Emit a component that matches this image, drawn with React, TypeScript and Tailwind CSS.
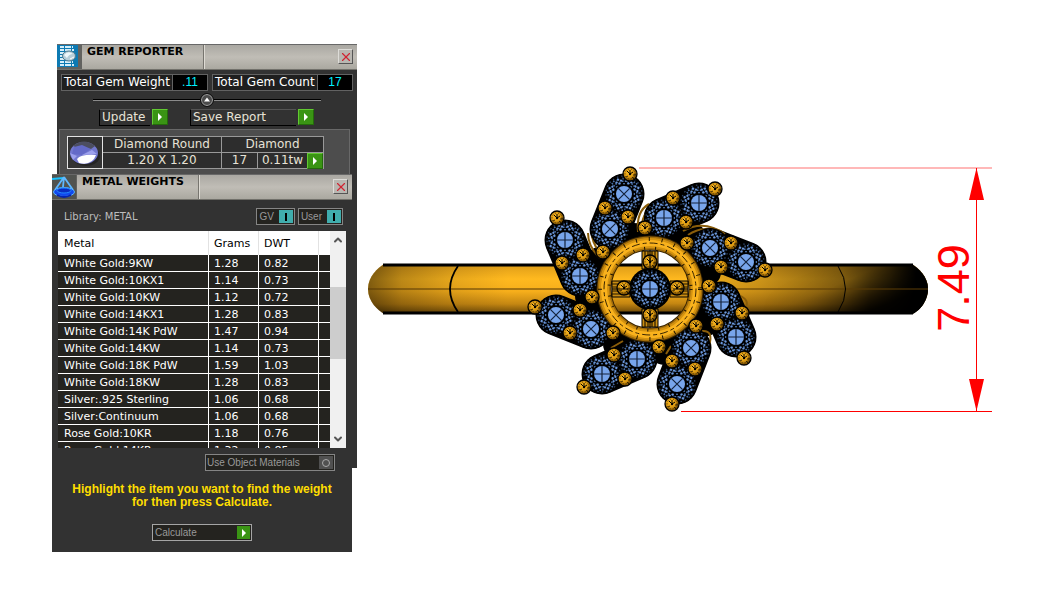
import type { ReactNode } from "react";
import { X, ChevronDown, ChevronUp } from "lucide-react";

const metals = [
  { name: "White Gold:9KW", grams: "1.28", dwt: "0.82" },
  { name: "White Gold:10KX1", grams: "1.14", dwt: "0.73" },
  { name: "White Gold:10KW", grams: "1.12", dwt: "0.72" },
  { name: "White Gold:14KX1", grams: "1.28", dwt: "0.83" },
  { name: "White Gold:14K PdW", grams: "1.47", dwt: "0.94" },
  { name: "White Gold:14KW", grams: "1.14", dwt: "0.73" },
  { name: "White Gold:18K PdW", grams: "1.59", dwt: "1.03" },
  { name: "White Gold:18KW", grams: "1.28", dwt: "0.83" },
  { name: "Silver:.925 Sterling", grams: "1.06", dwt: "0.68" },
  { name: "Silver:Continuum", grams: "1.06", dwt: "0.68" },
  { name: "Rose Gold:10KR", grams: "1.18", dwt: "0.76" },
  { name: "Rose Gold:14KR", grams: "1.32", dwt: "0.85" },
];

// [x, y, rotation] of every accent stone, listed in pairs that share one setting
const gemPairs = [
  [[624, 194, 45], [610, 229, 45]],
  [[565, 240, 0], [580, 276, 0]],
  [[699, 203, 0], [664, 218, 0]],
  [[746, 262, 45], [710, 248, 45]],
  [[556, 315, 45], [591, 329, 45]],
  [[602, 374, 0], [637, 359, 0]],
  [[736, 337, 0], [721, 302, 0]],
  [[677, 384, 45], [691, 348, 45]],
];

const prongs = [
  [630, 174], [605, 208], [628, 217], [557, 218], [583, 255], [562, 263], [603, 252], [645, 228],
  [715, 189], [673, 198], [686, 222], [687, 243], [731, 243], [721, 267], [765, 270], [709, 286],
  [535, 307], [580, 310], [570, 333], [592, 297], [613, 333], [614, 355], [584, 387], [625, 379],
  [742, 313], [717, 324], [744, 358], [696, 326], [659, 347], [672, 361], [695, 369], [672, 404],
];

// dark undersides where neighbouring settings meet the halo
const joints = [
  [600, 262], [590, 296], [645, 236], [690, 236], [706, 272], [704, 322], [664, 350], [618, 344], [604, 316], [634, 238],
];

const octants = [0, 45, 90, 135, 180, 225, 270, 315];

function Gem({ x, y, turn }: { x: number; y: number; turn: number }) {
  return (
    <g transform={`translate(${x} ${y})`}>
      <circle r="20" fill="#000" />
      <g transform={`rotate(${turn})`} fill="none">
        <circle r="18" stroke="#30486b" strokeWidth="1.2" strokeDasharray="1.5 3" />
        {octants.map((a) => (
          <g key={a} transform={`rotate(${a + 22})`}>
            <path d="M0 -17 L4 -13.500 L0 -10 L-4 -13.500Z" fill="#6c98dc" />
            <path d="M-2.500 -15.500 L2.500 -11.500 M2.500 -15.500 L-2.500 -11.500" stroke="#000" strokeWidth="1" />
          </g>
        ))}
        {octants.map((a) => (
          <g key={a} transform={`rotate(${a})`}>
            <path d="M-1.500 -16.500 h1.200 v2 h-1.200Z M1 -17 h1.500 v1.600 h-1.500Z M-2 -13.500 h1.500 v1.500 h-1.500Z M.8 -13.500 h1.500 v1.500 h-1.500Z" fill="#4f77b3" />
            <path d="M-1 -10.800 h2 v1 h-2Z" fill="#5d88c9" />
          </g>
        ))}
        <circle r="8" fill="#78a5eb" />
        <path d="M-8 0H8M0 -8V8" stroke="#14233c" strokeWidth="1.2" />
      </g>
    </g>
  );
}

function Prong({ x, y }: { x: number; y: number }) {
  return (
    <g transform={`translate(${x} ${y})`} fill="none" stroke="#000">
      <circle r="7" fill="url(#bead)" strokeWidth="1.300" />
      <circle r="5" stroke="#2b1c00" strokeWidth=".8" strokeDasharray="1 2" />
      <path d="M-3 -3 L0 0 L3 -2 M0 0 V-4" strokeWidth="1" />
      <circle r="1.200" fill="#000" strokeWidth="0" />
      <path d="M2 3 L4 5 M-4 3 L-2 2 M3 1 H6" strokeWidth=".7" />
    </g>
  );
}

function RingView() {
  return (
    <svg className="h-full w-full" viewBox="360 0 679 612" role="img" aria-label="Ring model">
      <defs>
        <linearGradient id="band" x1="0" x2="0" y1="0" y2="1">
          <stop offset="0" stopColor="#dd9c18" />
          <stop offset=".3" stopColor="#ffb91f" />
          <stop offset=".55" stopColor="#f6ae1b" />
          <stop offset=".8" stopColor="#c58712" />
          <stop offset="1" stopColor="#684507" />
        </linearGradient>
        <linearGradient id="shade" x1="0" x2="1" y1="0" y2="0">
          <stop offset="0" stopColor="#000" stopOpacity=".5" />
          <stop offset=".06" stopColor="#000" stopOpacity=".26" />
          <stop offset=".15" stopColor="#000" stopOpacity=".1" />
          <stop offset=".25" stopColor="#000" stopOpacity="0" />
          <stop offset=".55" stopColor="#000" stopOpacity="0" />
          <stop offset=".7" stopColor="#000" stopOpacity=".2" />
          <stop offset=".85" stopColor="#000" stopOpacity=".48" />
          <stop offset=".93" stopColor="#000" stopOpacity=".76" />
          <stop offset=".98" stopColor="#000" />
          <stop offset="1" stopColor="#000" />
        </linearGradient>
        <linearGradient id="corner" gradientUnits="userSpaceOnUse" x1="826" x2="862" y1="264" y2="350">
          <stop offset="0" stopColor="#000" stopOpacity="0" />
          <stop offset=".25" stopColor="#000" stopOpacity=".08" />
          <stop offset=".65" stopColor="#000" stopOpacity=".9" />
          <stop offset="1" stopColor="#000" />
        </linearGradient>
        <linearGradient id="fade" gradientUnits="userSpaceOnUse" x1="760" x2="870" y1="0" y2="0">
          <stop offset="0" stopColor="#000" />
          <stop offset="1" stopColor="#fff" />
        </linearGradient>
        <mask id="fadeIn">
          <path d="M760 260 H930 V320 H760Z" fill="url(#fade)" />
        </mask>
        <radialGradient id="bead" cx=".42" cy=".4">
          <stop offset="0" stopColor="#ffbd26" />
          <stop offset=".65" stopColor="#dc9a12" />
          <stop offset="1" stopColor="#8a5c05" />
        </radialGradient>
      </defs>

      {/* shank */}
      <path
        d="M384 264 H912 C918 268 928 276 928 289 C928 302 918 312 912 314 H384 C378 310 368 302 368 289 C368 276 378 268 384 264Z"
        fill="url(#band)"
      />
      <path
        d="M384 264 H912 C918 268 928 276 928 289 C928 302 918 312 912 314 H384 C378 310 368 302 368 289 C368 276 378 268 384 264Z"
        fill="url(#shade)"
      />
      <path
        d="M760 265 H912 C918 268 928 276 928 289 C928 302 918 312 912 314 H760Z"
        fill="url(#corner)"
        mask="url(#fadeIn)"
      />
      <path d="M383 265 H913 M383 313 H913" fill="none" stroke="#000" strokeWidth="3" />
      <path d="M368 289 H928" fill="none" stroke="#5a3c05" strokeWidth="1.500" strokeOpacity=".7" />
      <path d="M458 266 Q442 289 458 312" fill="none" stroke="#000" strokeWidth="1.800" />
      <path d="M838 266 Q853 289 838 312" fill="none" stroke="#000" strokeWidth="1" />

      {/* galleries under the accent stones */}
      <circle cx="650" cy="289" r="57" fill="none" stroke="#000" strokeWidth="13" />
      {joints.map(([x, y]) => (
        <circle key={`${x}-${y}`} cx={x} cy={y} r="15" fill="#000" />
      ))}

      {/* opening of the halo */}
      <circle cx="650" cy="289" r="41" fill="#fff" />
      <path d="M612 265 H688 V313 H612Z" fill="url(#band)" />
      <path d="M612 265 H688 M612 313 H688" fill="none" stroke="#000" strokeWidth="3" />

      <g strokeLinecap="round" strokeWidth="41" stroke="#000">
        {gemPairs.map(([a, b]) => (
          <path key={a[0]} d={`M${a[0]} ${a[1]} L${b[0]} ${b[1]}`} />
        ))}
      </g>
      <g fill="none" stroke="#8a5d0a" strokeWidth="2">
        <path d="M588 233 Q588 247 600 258 M592 236 Q594 248 604 256" />
        <path d="M638 232 Q636 211 649 204 M642 229 Q641 214 653 207" />
        <path d="M683 231 Q704 219 725 234 M688 235 Q704 224 720 234" />
        <path d="M741 296 Q751 302 744 309 M702 331 Q714 330 709 346 M700 338 L709 341" />
        <path d="M666 354 L671 346 M571 250 L577 247 M611 348 L623 341" />
      </g>

      {gemPairs.flat().map(([x, y, turn]) => (
        <Gem key={`${x}-${y}`} x={x} y={y} turn={turn} />
      ))}

      {/* halo tube */}
      <g fill="none">
        <circle cx="650" cy="289" r="46" stroke="#3a2500" strokeWidth="15" />
        <circle cx="650" cy="289" r="46" stroke="#a36e0b" strokeWidth="13" />
        <circle cx="650" cy="289" r="46" stroke="#d39210" strokeWidth="10" />
        <circle cx="650" cy="289" r="46" stroke="#f9b21d" strokeWidth="6" />
        <circle cx="650" cy="289" r="46" stroke="#3a2600" strokeWidth="1" strokeDasharray="8 3 4 3" />
        <circle cx="650" cy="289" r="50" stroke="#1e1400" strokeWidth="4" strokeDasharray="1 12" />
        <circle cx="650" cy="289" r="41" stroke="#1e1400" strokeWidth="3" strokeDasharray="1 10" />
      </g>

      {/* centre stone with its four bars */}
      {[0, 90, 180, 270].map((a) => (
        <g key={a} transform={`translate(650 289) rotate(${a})`}>
          <path d="M-8 -20 V-38 H8 V-20Z" fill="#c98c12" stroke="#000" strokeWidth="1" />
          <path d="M-5 -20 V-38 M-2 -20 V-38 M2 -20 V-38 M5 -20 V-38" stroke="#251900" strokeWidth="1.200" />
        </g>
      ))}
      <circle cx="650" cy="289" r="21" fill="#000" />
      <Gem x={650} y={289} turn={0} />
      {[[650, 262], [677, 288], [650, 315], [624, 288], ...prongs].map(([x, y]) => (
        <Prong key={`${x}-${y}`} x={x} y={y} />
      ))}
      <path d="M650 250 V281 M650 297 V328 M612 289 H628 M673 289 H688" fill="none" stroke="#000" strokeWidth="1" />

      {/* dimension */}
      <path d="M639 168 H992" fill="none" stroke="#ffb8b8" strokeWidth="2" />
      <path d="M681 411.500 H992" fill="none" stroke="#ff0000" strokeWidth="1" />
      <path d="M976.500 168 V411" fill="none" stroke="#ff0000" strokeWidth="1" />
      <path d="M976.500 168 L984 200 H969Z M976.500 411 L984 379 H969Z" fill="#ff0000" />
      <text
        transform="translate(969 288) rotate(-90)"
        textAnchor="middle"
        fontSize="45"
        fill="#ff0000"
        className="font-['Liberation_Sans',sans-serif]"
      >
        7.49
      </text>
    </svg>
  );
}

function PlayIcon() {
  return (
    <svg className="h-2 w-2" viewBox="0 0 8 8" aria-hidden="true">
      <path d="M2 0 L6 4 L2 8Z" fill="#fff" />
    </svg>
  );
}

const greenBox =
  "flex h-4 w-4 shrink-0 items-center justify-center border border-t-[#62c932] border-l-[#62c932] border-r-[#246b0b] border-b-[#246b0b] bg-[#3a9414]";

function TitleBar({ title, icon }: { title: string; icon: ReactNode }) {
  return (
    <header className="flex h-[26px] border-t border-b border-t-[#686868] border-b-[#72716b] bg-linear-to-b from-[#aaa8a2] via-[#c0bdb6] to-[#aaa8a0]">
      <div className="h-6 w-[25px] shrink-0 bg-[#62625f]">{icon}</div>
      <h2 className="w-[122px] border-r border-[#77756f] pl-[5px] text-[11px] leading-[14px] font-bold whitespace-nowrap text-black">
        {title}
      </h2>
      <div className="flex flex-1 items-start justify-end border-l border-[#dedbd4] pt-1 pr-1">
        <button
          type="button"
          aria-label={`Close ${title}`}
          className="flex h-[15px] w-[15px] items-center justify-center border border-t-[#dddcd8] border-l-[#dddcd8] border-r-[#555] border-b-[#555] bg-[#b9b7b1] text-[#d02432]"
        >
          <X className="h-3.5 w-3.5 shrink-0" strokeWidth={2} />
        </button>
      </div>
    </header>
  );
}

function ReporterIcon() {
  return (
    <svg className="h-6 w-6" viewBox="0 0 24 24" aria-hidden="true">
      <path d="M0 0H24V24H0Z" fill="#62625f" />
      <path d="M0 0H21V22H0Z" fill="#0d7ab3" />
      <path d="M3 2H16M3 5H17M3 8H8M3 11H7M3 14H8M3 17H16M3 20H17" stroke="#d5eef9" strokeWidth="2" strokeDasharray="4 1 6 1" />
      <ellipse cx="12" cy="11" rx="6.500" ry="5" fill="#b6ced9" stroke="#527b8e" />
      <path d="M7 10 Q11 5 16 9 Q12 9 10 13Z" fill="#edf7fa" />
      <path d="M13 14 L17 12" stroke="#fff" />
    </svg>
  );
}

function ScaleIcon() {
  return (
    <svg className="h-6 w-6" viewBox="0 0 24 24" aria-hidden="true">
      <path d="M0 0H24V24H0Z" fill="#51534f" />
      <path d="M0 4 L12 3" stroke="#19c2ff" strokeWidth="2" />
      <path d="M12 2 L3 15 M12 2 L11 12 M12 2 L21 15" fill="none" stroke="#5fb8ff" strokeWidth="1.800" />
      <ellipse cx="12" cy="17" rx="10.500" ry="4.500" fill="#1148ee" stroke="#5ab5ff" />
      <ellipse cx="12" cy="15.500" rx="7" ry="2.500" fill="#0a2cc0" stroke="#238aff" />
      <path d="M5 20 Q12 24 19 20" fill="none" stroke="#0624ad" strokeWidth="2" />
    </svg>
  );
}

function GemReporter() {
  return (
    <section className="absolute top-11 left-[57px] h-[424px] w-[300px] bg-[#323232]">
      <TitleBar title="GEM REPORTER" icon={<ReporterIcon />} />
      <div className="flex gap-1 px-1 pt-1 text-xs leading-[15px]">
        <dl className="flex w-[147px] border border-[#626262] bg-[#1f1f1f]">
          <dt className="flex-1 pl-0.5 whitespace-nowrap text-white">Total Gem Weight</dt>
          <dd className="w-[35px] border-l border-[#626262] bg-black text-center font-['Liberation_Sans',sans-serif] text-[#00f0ff]">
            .11
          </dd>
        </dl>
        <dl className="flex w-[141px] border border-[#626262] bg-[#1f1f1f]">
          <dt className="flex-1 pl-0.5 whitespace-nowrap text-white">Total Gem Count</dt>
          <dd className="w-[35px] border-l border-[#626262] bg-black text-center font-['Liberation_Sans',sans-serif] text-[#00f0ff]">
            17
          </dd>
        </dl>
      </div>

      <div className="flex h-[18px] items-center pr-9 pl-9">
        <div className="h-0.5 flex-1 border-t border-black bg-[#8b8b8b]" />
        <button type="button" aria-label="Collapse totals" className="h-3.5 w-3.5">
          <svg viewBox="0 0 14 14" aria-hidden="true">
            <circle cx="7" cy="7" r="5.500" fill="#4b4b4b" stroke="#a5a5a5" />
            <circle cx="7" cy="7" r="6.500" fill="none" stroke="#111" />
            <path d="M7 4.500 L10 8.500 H4Z" fill="#fff" />
          </svg>
        </button>
        <div className="h-0.5 flex-1 border-t border-black bg-[#8b8b8b]" />
      </div>

      <div className="flex pl-[42px] text-xs leading-[15px] text-[#e7e2d6]">
        <button type="button" className="flex gap-0.5">
          <span className="w-[51px] border-t border-b border-l border-black border-t-[#555] pl-0.5 text-left">Update</span>
          <span className={greenBox}>
            <PlayIcon />
          </span>
        </button>
        <button type="button" className="ml-[22px] flex gap-0.5">
          <span className="w-[106px] border-t border-b border-l border-black border-t-[#555] pl-0.5 text-left">Save Report</span>
          <span className={greenBox}>
            <PlayIcon />
          </span>
        </button>
      </div>

      <div className="mt-[3px] mr-[7px] ml-0.5 h-14 border border-[#686868] bg-[#4d4d4d] pt-1.5 pl-[7px] text-xs text-[#e7e2d6]">
        <div className="flex">
          <svg className="h-[33px] w-9 border border-[#e3e3e3] bg-[#333]" viewBox="0 0 34 31" aria-hidden="true">
            <ellipse cx="18" cy="19" rx="14" ry="10" fill="#111" opacity=".45" />
            <ellipse cx="16" cy="16" rx="14" ry="11" fill="#7378cf" />
            <path d="M5 9 Q16 0 27 9 L23 12 L10 11Z" fill="#4c4e60" />
            <path d="M6 10 L14 8 L23 12 L14 18 L4 17Z" fill="#646ac8" />
            <path d="M2 16 L9 19 L5 23Z M14 18 L24 13 L29 17Z" fill="#9da1ed" />
            <path d="M9 22 Q13 17 28 18 Q24 29 11 26Z" fill="#fff" />
          </svg>
          <table className="w-[221px] table-fixed border-separate border-spacing-0 border-t border-r border-[#999] bg-[#2d2d2d] text-center leading-[15px]">
            <colgroup>
              <col className="w-[118px]" />
              <col className="w-9" />
              <col className="w-[50px]" />
              <col className="w-4" />
            </colgroup>
            <tbody>
              <tr>
                <td className="border-b border-[#999] p-0">Diamond Round</td>
                <td colSpan={3} className="border-b border-l border-[#999] p-0">Diamond</td>
              </tr>
              <tr>
                <td className="border-b border-[#999] p-0">1.20 X 1.20</td>
                <td className="border-b border-l border-[#999] p-0">17</td>
                <td className="border-b border-l border-[#999] p-0">0.11tw</td>
                <td className="p-0">
                  <button type="button" aria-label="Diamond details" className={greenBox}>
                    <PlayIcon />
                  </button>
                </td>
              </tr>
            </tbody>
          </table>
        </div>
      </div>
    </section>
  );
}

function Toggle({ label }: { label: string }) {
  return (
    <button
      type="button"
      aria-pressed="true"
      className="flex h-[17px] items-center gap-[5px] border border-[#858585] bg-[#24231f] pr-px pl-0.5 font-['Liberation_Sans',sans-serif] text-[10px] text-[#999]"
    >
      {label}
      <span className="flex h-[13px] w-3.5 items-center justify-center bg-[#40adad]">
        <span className="h-2 w-0.5 bg-black" />
      </span>
    </button>
  );
}

function MetalWeights() {
  return (
    <section className="absolute top-[174px] left-13 w-[300px] bg-[#323232] pb-[11px]">
      <TitleBar title="METAL WEIGHTS" icon={<ScaleIcon />} />
      <div className="flex h-[31px] items-center pt-0.5 pr-[9px] pl-3 text-[10px] text-[#bdbdbd]">
        <p className="flex-1">Library: METAL</p>
        <div className="flex gap-[3px]">
          <Toggle label="GV" />
          <Toggle label="User" />
        </div>
      </div>

      <div className="mx-1.5 flex h-[217px] overflow-hidden bg-[#24231f]">
        <table className="w-[272px] table-fixed border-separate border-spacing-0 self-start text-left text-[11px]">
          <colgroup>
            <col className="w-[151px]" />
            <col className="w-[50px]" />
            <col className="w-[60px]" />
            <col className="w-[11px]" />
          </colgroup>
          <thead className="bg-white text-black">
            <tr className="h-6">
              <th className="border-r border-[#e2e2e2] p-0 pt-0.5 pl-1.5 font-normal">Metal</th>
              <th className="border-r border-[#e2e2e2] p-0 pt-0.5 pl-[5px] font-normal">Grams</th>
              <th className="border-r border-[#e2e2e2] p-0 pt-0.5 pl-[5px] font-normal">DWT</th>
              <td className="p-0" />
            </tr>
          </thead>
          <tbody className="leading-[14px] whitespace-nowrap text-white">
            {metals.map((metal) => (
              <tr key={metal.name}>
                <td className="border-r border-b border-white p-0 pt-0.5 pl-1.5">{metal.name}</td>
                <td className="border-r border-b border-white p-0 pt-0.5 pl-[5px]">{metal.grams}</td>
                <td className="border-r border-b border-white p-0 pt-0.5 pl-[5px]">{metal.dwt}</td>
                <td className="border-b border-white p-0" />
              </tr>
            ))}
          </tbody>
        </table>
        <div className="flex flex-1 flex-col justify-between bg-[#f0f0f0] text-[#555]">
          <button type="button" aria-label="Scroll up" className="flex h-[18px] items-center justify-center">
            <ChevronUp className="h-3 w-3" strokeWidth={4} />
          </button>
          <div className="flex-1 pt-[38px]">
            <div className="h-[72px] bg-[#cdcdcd]" />
          </div>
          <button type="button" aria-label="Scroll down" className="flex h-[18px] items-center justify-center">
            <ChevronDown className="h-3 w-3" strokeWidth={4} />
          </button>
        </div>
      </div>

      <div className="flex justify-end pt-1.5 pr-[17px] font-['Liberation_Sans',sans-serif] text-[10px] text-[#999]">
        <button
          type="button"
          aria-pressed="false"
          className="flex h-[17px] w-[130px] items-center justify-between border border-[#858585] bg-[#24231f] pr-px pl-px"
        >
          Use Object Materials
          <span className="flex h-[13px] w-3.5 items-center justify-center bg-[#505050]">
            <span className="h-2 w-2 rounded-full border border-[#aaa]" />
          </span>
        </button>
      </div>

      <p className="pt-3 text-center font-['Liberation_Sans',sans-serif] text-xs leading-[13px] font-bold text-[#ffde00]">
        Highlight the item you want to find the weight
        <br />
        for then press Calculate.
      </p>

      <div className="flex justify-center pt-[15px] font-['Liberation_Sans',sans-serif] text-[10px] text-[#999]">
        <button
          type="button"
          className="flex h-[17px] w-[100px] items-center justify-between border border-[#a5a5a5] bg-[#24231f] pr-px pl-0.5"
        >
          Calculate
          <span className="flex h-[13px] w-[13px] items-center justify-center bg-[#3a9414]">
            <PlayIcon />
          </span>
        </button>
      </div>
    </section>
  );
}

export default function App() {
  return (
    <main className="flex h-screen min-h-[560px] bg-white font-['DejaVu_Sans',sans-serif]">
      <aside className="relative w-[360px] shrink-0">
        <GemReporter />
        <MetalWeights />
      </aside>
      <div className="min-w-0 flex-1">
        <RingView />
      </div>
    </main>
  );
}
